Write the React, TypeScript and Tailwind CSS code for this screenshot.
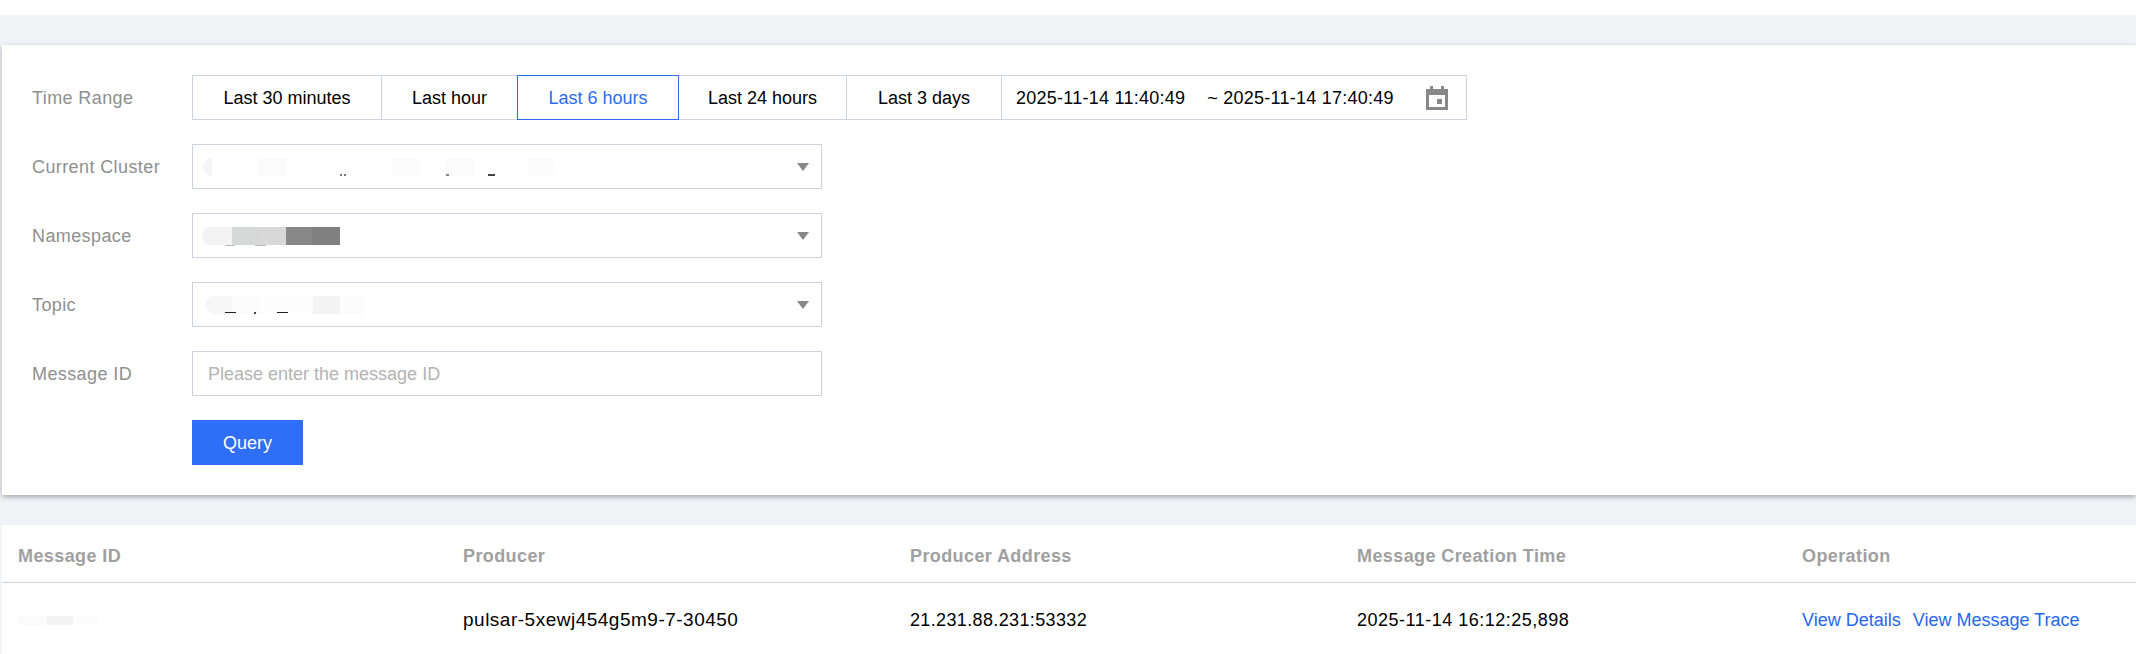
const font = "font-['Liberation_Sans',Arial,sans-serif]";

const Caret = () => (
  <span className="ml-auto mr-[12px] h-0 w-0 border-x-[6px] border-t-[8px] border-x-transparent border-t-[#888888]" />
);

const Select = ({ blocks, specks, top }: { blocks: React.ReactNode; specks?: React.ReactNode; top: string }) => (
  <div className="relative flex h-[45px] w-[630px] items-center border border-[#cfd2de] bg-white">
    <div className={`flex h-[18px] items-stretch ${top}`}>{blocks}</div>
    {specks}
    <Caret />
  </div>
);

const Row = ({ label, children }: { label: string; children: React.ReactNode }) => (
  <div className="flex h-[45px] items-center">
    <div className="w-[190px] pl-[30px] pt-[1px] text-[18px] tracking-[0.4px] text-[#8f8f8f]">{label}</div>
    {children}
  </div>
);

const Seg = ({ w, children, active }: { w: string; children: string; active?: boolean }) => (
  <div
    className={`ml-[-1px] flex h-[45px] items-center justify-center border pt-[1px] text-[18px] first:ml-0 ${w} ${
      active ? "z-10 border-[#2d6cf0] text-[#2d6cf0]" : "border-[#cfd2de] text-black"
    }`}
  >
    {children}
  </div>
);

export default function App() {
  return (
    <div className={`h-[654px] w-[2136px] overflow-hidden bg-white ${font}`}>
      <div className="mt-[15px] h-[639px] bg-[#f2f3f7] pl-[2px] pt-[30px]">
        <section className="h-[450px] bg-white pt-[30px] shadow-[0_2px_5px_rgba(70,75,90,0.45)]">
          <div className="flex flex-col gap-[24px]">
            <Row label="Time Range">
              <div className="flex">
                <Seg w="w-[190px]">Last 30 minutes</Seg>
                <Seg w="w-[137px]">Last hour</Seg>
                <Seg w="w-[162px]" active>Last 6 hours</Seg>
                <Seg w="w-[169px]">Last 24 hours</Seg>
                <Seg w="w-[156px]">Last 3 days</Seg>
                <div className="ml-[-1px] flex h-[45px] w-[466px] items-center border border-[#cfd2de] pl-[14px] pt-[1px] text-[18px] tracking-[0.25px] text-black">
                  <span>2025-11-14 11:40:49</span>
                  <span className="ml-[22px]">~ 2025-11-14 17:40:49</span>
                  <svg className="ml-[32px] text-[#888888]" width="22" height="24" viewBox="0 0 22 24" fill="currentColor">
                    <path fillRule="evenodd" d="M4 0h3v3h8V0h3v3h4v21H0V3h4V0ZM3 9v12h16V9H3Z" />
                    <rect x="11" y="13" width="5" height="5" />
                  </svg>
                </div>
              </div>
            </Row>
            <Row label="Current Cluster">
              <Select
                top="ml-[10px]"
                blocks={
                  <>
                    <div className="w-[9px] rounded-l-full bg-[#f5f5f5]" />
                    <div className="w-[46px] bg-[#fefefe]" />
                    <div className="w-[28px] bg-[#fbfbfb]" />
                    <div className="w-[106px] bg-[#fefefe]" />
                    <div className="w-[28px] bg-[#fcfcfc]" />
                    <div className="w-[26px] bg-[#fefefe]" />
                    <div className="w-[28px] bg-[#fbfbfb]" />
                    <div className="w-[54px] bg-[#fefefe]" />
                    <div className="w-[26px] rounded-r-md bg-[#fcfcfc]" />
                  </>
                }
                specks={
                  <>
                    <span className="absolute left-[147px] top-[29px] h-[2px] w-[2px] bg-[#777777]" />
                    <span className="absolute left-[151px] top-[29px] h-[2px] w-[2px] bg-[#777777]" />
                    <span className="absolute left-[253px] top-[29px] h-[2px] w-[3px] bg-[#888888]" />
                    <span className="absolute left-[295px] top-[29px] h-[2px] w-[7px] bg-[#444444]" />
                  </>
                }
              />
            </Row>
            <Row label="Namespace">
              <Select
                top="ml-[9px]"
                blocks={
                  <>
                    <div className="w-[30px] rounded-l-full bg-[#f3f3f3]" />
                    <div className="w-[26px] bg-[#d6d7d7]" />
                    <div className="w-[28px] bg-[#d8d8d8]" />
                    <div className="w-[26px] bg-[#888888]" />
                    <div className="w-[28px] bg-[#808080]" />
                  </>
                }
                specks={
                  <>
                    <span className="absolute left-[32px] top-[31px] h-[1px] w-[10px] bg-[#bbbbbb]" />
                    <span className="absolute left-[62px] top-[31px] h-[1px] w-[11px] bg-[#bbbbbb]" />
                  </>
                }
              />
            </Row>
            <Row label="Topic">
              <Select
                top="ml-[12px]"
                blocks={
                  <>
                    <div className="w-[27px] rounded-l-full bg-[#f7f7f7]" />
                    <div className="w-[27px] bg-[#fbfbfb]" />
                    <div className="w-[54px] bg-[#fdfdfd]" />
                    <div className="w-[27px] bg-[#f3f3f3]" />
                    <div className="w-[25px] bg-[#fcfcfc]" />
                  </>
                }
                specks={
                  <>
                    <span className="absolute left-[32px] top-[29px] h-[1px] w-[11px] bg-[#222222]" />
                    <span className="absolute left-[61px] top-[29px] h-[2px] w-[2px] bg-[#444444]" />
                    <span className="absolute left-[84px] top-[29px] h-[1px] w-[11px] bg-[#222222]" />
                  </>
                }
              />
            </Row>
            <Row label="Message ID">
              <input
                placeholder="Please enter the message ID"
                className="h-[45px] w-[630px] border border-[#cfd2de] px-[15px] pt-[1px] text-[18px] text-black outline-none placeholder:text-[#b4b4b4]"
              />
            </Row>
            <div className="flex pl-[190px]">
              <button className="h-[45px] w-[111px] bg-[#2f6ff7] pt-[1px] text-[18px] text-white">Query</button>
            </div>
          </div>
        </section>
        <section className="mt-[30px] h-[200px] bg-white">
          <div className="grid h-[58px] grid-cols-[445px_447px_447px_445px_1fr] items-center border-b border-[#cfd2de] pl-[16px] pt-[5px] text-[18px] font-bold tracking-[0.4px] text-[#a0a0a0]">
            <div>Message ID</div>
            <div>Producer</div>
            <div>Producer Address</div>
            <div>Message Creation Time</div>
            <div>Operation</div>
          </div>
          <div className="grid h-[73px] grid-cols-[445px_447px_447px_445px_1fr] items-center pl-[16px] pt-[1px] text-[18px] text-black">
            <div className="flex h-[9px] w-[80px] items-stretch">
              <div className="w-[29px] bg-[#fbfbfb]" />
              <div className="w-[26px] bg-[#f3f3f3]" />
              <div className="w-[25px] bg-[#fcfcfc]" />
            </div>
            <div className="text-[19px] tracking-[0.5px]">pulsar-5xewj454g5m9-7-30450</div>
            <div className="tracking-[0.36px]">21.231.88.231:53332</div>
            <div className="tracking-[0.5px]">2025-11-14 16:12:25,898</div>
            <div className="flex gap-[12px] text-[#2468f2]">
              <a>View Details</a>
              <a>View Message Trace</a>
            </div>
          </div>
        </section>
      </div>
    </div>
  );
}
